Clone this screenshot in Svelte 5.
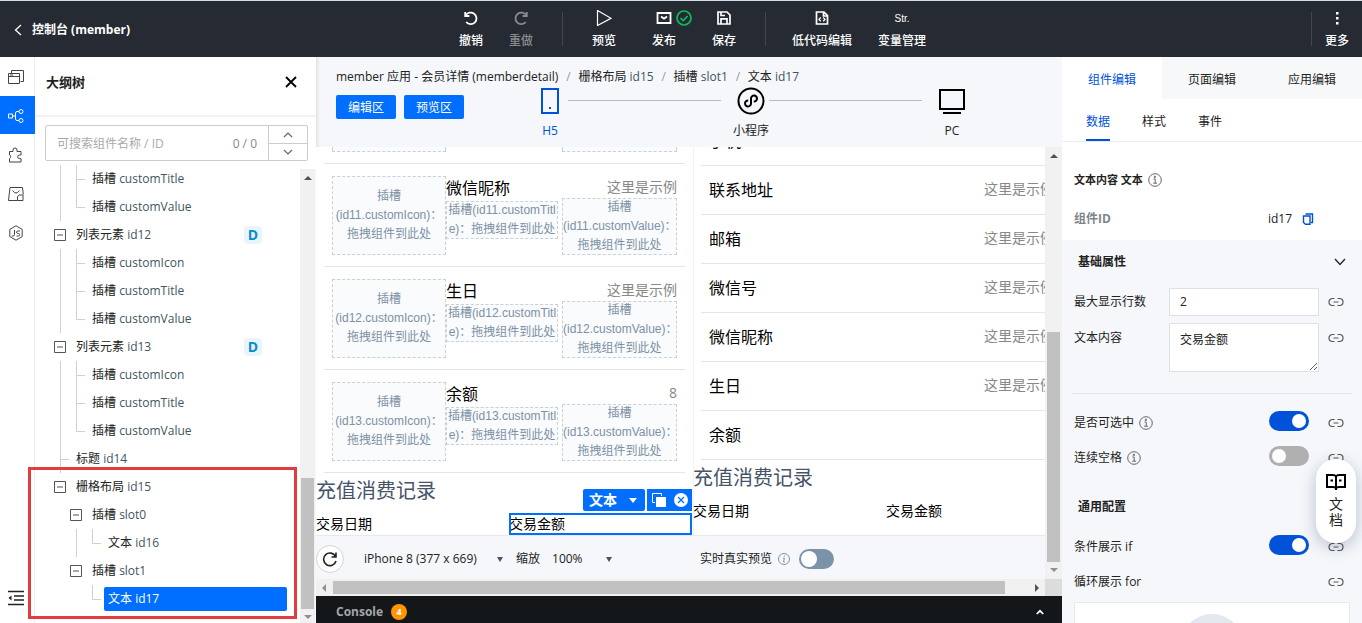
<script lang="ts">
  // guides: v = line, t = tee, l = elbow, o = toggle, e = empty
  const treeRows = [
    { guides: 'vt', name: '插槽', id: 'customTitle' },
    { guides: 'vl', name: '插槽', id: 'customValue' },
    { guides: 'o', name: '列表元素', id: 'id12', badge: true },
    { guides: 'vt', name: '插槽', id: 'customIcon' },
    { guides: 'vt', name: '插槽', id: 'customTitle' },
    { guides: 'vl', name: '插槽', id: 'customValue' },
    { guides: 'o', name: '列表元素', id: 'id13', badge: true },
    { guides: 'vt', name: '插槽', id: 'customIcon' },
    { guides: 'vt', name: '插槽', id: 'customTitle' },
    { guides: 'vl', name: '插槽', id: 'customValue' },
    { guides: 't', name: '标题', id: 'id14' },
    { guides: 'o', name: '栅格布局', id: 'id15' },
    { guides: 'eo', name: '插槽', id: 'slot0' },
    { guides: 'evl', name: '文本', id: 'id16' },
    { guides: 'eo', name: '插槽', id: 'slot1' },
    { guides: 'eel', name: '文本', id: 'id17', selected: true }
  ];

  const editRows = [
    { id: 'id11', title: '微信昵称', value: '这里是示例' },
    { id: 'id12', title: '生日', value: '这里是示例' },
    { id: 'id13', title: '余额', value: '8' }
  ];

  const previewRows = [
    { title: '手机', value: '' },
    { title: '联系地址', value: '这里是示例' },
    { title: '邮箱', value: '这里是示例' },
    { title: '微信号', value: '这里是示例' },
    { title: '微信昵称', value: '这里是示例' },
    { title: '生日', value: '这里是示例' },
    { title: '余额', value: '' }
  ];

  const crumbs = [
    { name: '栅格布局', id: 'id15' },
    { name: '插槽', id: 'slot1' },
    { name: '文本', id: 'id17' }
  ];

  let keyword = '';
  let maxLines = '2';
  let content = '交易金额';
  let selectable = true;
  let spaces = false;
  let condition = true;
  let livePreview = false;
</script>

{#snippet info()}
  <svg class="info" viewBox="0 0 14 14" width="14" height="14" fill="none" stroke="currentColor">
    <circle cx="7" cy="7" r="6.3" />
    <path d="M5.5 6h1.7v4M5.2 10.2h3.8M6.4 3.2v1.3h1V3.2z" />
  </svg>
{/snippet}

{#snippet link()}
  <button class="plain link" aria-label="绑定数据">
    <svg viewBox="0 0 16 10" width="16" height="10" fill="none" stroke="currentColor" stroke-width="1.2">
      <path d="M6.5 1.5H4.5a3.5 3.5 0 0 0 0 7h2M9.5 1.5h2a3.5 3.5 0 0 1 0 7h-2M5.5 5h5" />
    </svg>
  </button>
{/snippet}

{#snippet arrow(dir)}
  <svg class="arrow" viewBox="0 0 8 8" width="8" height="8" fill="#505050">
    {#if dir === 'up'}<path d="M0 6l4-4 4 4z" />
    {:else if dir === 'down'}<path d="M0 2l4 4 4-4z" fill="#909090" />
    {:else if dir === 'left'}<path d="M6 0L2 4l4 4z" fill="#909090" />
    {:else}<path d="M2 0l4 4-4 4z" />{/if}
  </svg>
{/snippet}

<div class="app">
  <header class="topbar">
    <div class="side">
      <a class="back" href="#console">
        <svg viewBox="0 0 8 12" width="8" height="12" fill="none" stroke="#fff" stroke-width="1.3"><path d="M7 1L1.5 6 7 11" /></svg>
        控制台 (member)
      </a>
    </div>
    <nav class="tools">
      <button class="plain tool narrow">
        <svg viewBox="0 0 16 16" width="16" height="16" fill="none" stroke="currentColor" stroke-width="1.8"><path d="M2.2 2v4h4.2M2.6 5.6A5.8 5.8 0 1 1 3.2 12" /></svg>
        撤销
      </button>
      <button class="plain tool narrow" disabled>
        <svg viewBox="0 0 16 16" width="16" height="16" fill="none" stroke="currentColor" stroke-width="1.8"><path d="M13.8 2v4H9.6M13.4 5.6A5.8 5.8 0 1 0 12.8 12" /></svg>
        重做
      </button>
      <span class="divider first"></span>
      <button class="plain tool">
        <svg viewBox="0 0 16 16" width="16" height="16" fill="none" stroke="currentColor" stroke-width="1.2"><path d="M1.5 0.5L15 8.3 1.5 15.5z" /></svg>
        预览
      </button>
      <button class="plain tool">
        <span class="icon-wrap">
          <svg viewBox="0 0 16 16" width="16" height="16" fill="none" stroke="currentColor" stroke-width="1.8"><path d="M1.5 3h13v10h-13zM5 6.5l3 2.2 3-2.2" /></svg>
          <svg class="done" viewBox="0 0 16 16" width="16" height="16" fill="none" stroke="#0abf5b" stroke-width="1.7"><circle cx="8" cy="8" r="7" /><path d="M4.5 8l2.6 2.6 4.6-4.6" /></svg>
        </span>
        发布
      </button>
      <button class="plain tool">
        <svg viewBox="0 0 16 16" width="16" height="16" fill="none" stroke="currentColor" stroke-width="1.7"><path d="M2 2h9l3 3v9H2zM5 14V8.8h6V14M5 2v3.5h4" /></svg>
        保存
      </button>
      <span class="divider second"></span>
      <button class="plain tool">
        <svg viewBox="0 0 16 16" width="16" height="16" fill="none" stroke="currentColor" stroke-width="1.7"><path d="M2.5 2h7.5l3.5 3.5V14h-11zM9.5 2v4h4" /><path d="M6.8 7.5L5 9.4l1.8 1.9M9.2 7.5L11 9.4l-1.8 1.9" stroke-width="1.3" /></svg>
        低代码编辑
      </button>
      <button class="plain tool last">
        <span class="str">Str.</span>
        变量管理
      </button>
    </nav>
    <div class="side end">
      <span class="divider"></span>
      <button class="plain tool narrow">
        <svg viewBox="0 0 16 16" width="16" height="16" fill="currentColor"><path d="M7 2h2.5v2.5H7zM7 7h2.5v2.5H7zM7 12h2.5v2.5H7z" /></svg>
        更多
      </button>
    </div>
  </header>

  <div class="shell">
    <nav class="rail">
      <button class="plain" aria-label="页面">
        <svg viewBox="0 0 16 16" width="16" height="16" fill="none" stroke="currentColor"><path d="M.5 4.5h11v10H.5zM.5 7.5h11M3.5 4.5v-3h12v11h-3M2 6h3" /></svg>
      </button>
      <button class="plain active" aria-label="大纲树">
        <svg viewBox="0 0 16 16" width="16" height="16" fill="none" stroke="currentColor"><path d="M.5 6h4v4h-4zM4.5 8h3M11 3.5H9q-1.5 0-1.5 1.5v6q0 1.5 1.5 1.5h2" /><circle cx="13" cy="3.5" r="2" /><circle cx="13" cy="12.5" r="2" /></svg>
      </button>
      <button class="plain" aria-label="组件">
        <svg viewBox="0 0 16 16" width="16" height="16" fill="none" stroke="currentColor"><path d="M1.5 4.5H5V3a2 2 0 0 1 4 0v1.500h4v3.500h-1.500a1.800 1.800 0 0 0 0 3.600H13v3.400H1.500v-3.500C3 11 3 8 1.500 8z" /></svg>
      </button>
      <button class="plain" aria-label="素材">
        <svg viewBox="0 0 16 16" width="16" height="16" fill="none" stroke="currentColor"><path d="M9.500 14.500H.5L2 1.500h12.500l.8 7M4.500 4.500q3.500 5 7 0M9.500 14.500v-4l2-1.500h3.500v5.500z" /></svg>
      </button>
      <button class="plain" aria-label="脚本">
        <svg viewBox="0 0 16 16" width="16" height="16" fill="none" stroke="currentColor"><path d="M8 .8l6.200 3.600v7.200L8 15.200l-6.200-3.600V4.400zM6.500 5v4.500q0 1.500-1.500 1.500H3.800M12 6H9.500q-1 .2-1 1.200t1 1.200h1q1.200.2 1.200 1.300T10.500 11H8.500" /></svg>
      </button>
      <button class="plain collapse" aria-label="收起">
        <svg viewBox="0 0 16 16" width="18" height="16" fill="none" stroke="#222" stroke-width="1.700"><path d="M0 1.500h16M6 6h10M6 10h10M0 14.500h16" /><path d="M3.500 5.500v5L.5 8z" fill="#222" stroke="none" /></svg>
      </button>
    </nav>

    <aside class="outline">
      <div class="outline-head">
        <h2>大纲树</h2>
        <button class="plain" aria-label="关闭">
          <svg viewBox="0 0 12 12" width="12" height="12" fill="none" stroke="#000" stroke-width="1.800"><path d="M1 1l10 10M11 1L1 11" /></svg>
        </button>
      </div>
      <div class="search">
        <input type="text" aria-label="搜索组件" placeholder="可搜索组件名称 / ID" bind:value={keyword} />
        <span class="count">0 / 0</span>
        <div class="steps">
          <button class="plain" aria-label="上一个"><svg viewBox="0 0 10 6" width="10" height="6" fill="none" stroke="#567" stroke-width="1.200"><path d="M1 5l4-4 4 4" /></svg></button>
          <button class="plain" aria-label="下一个"><svg viewBox="0 0 10 6" width="10" height="6" fill="none" stroke="#567" stroke-width="1.200"><path d="M1 1l4 4 4-4" /></svg></button>
        </div>
      </div>
      <div class="tree-area">
        <ul class="tree">
          {#each treeRows as row}
            <li>
              {#each row.guides as guide}
                {#if guide === 'o'}
                  <button class="plain guide" aria-label="折叠">
                    <svg viewBox="0 0 12 12" width="12" height="12" fill="none" stroke="#555"><path d="M.5 .5h11v11H.5zM3 6h6" /></svg>
                  </button>
                {:else}
                  <span class="guide {guide}"></span>
                {/if}
              {/each}
              <span class="node" class:selected={row.selected}>{row.name} <em>{row.id}</em></span>
              {#if row.badge}<b class="badge">D</b>{/if}
            </li>
          {/each}
        </ul>
        <div class="scroll-v outline-scroll">
          {@render arrow('up')}
          <span class="thumb"></span>
          {@render arrow('down')}
        </div>
        <div class="highlight"></div>
      </div>
    </aside>

    <main class="stage">
      <div class="stage-head">
        <div class="crumbs">
          <span>member 应用 - 会员详情 (memberdetail)</span>
          {#each crumbs as crumb}
            <i>/</i><span>{crumb.name} <em>{crumb.id}</em></span>
          {/each}
        </div>
        <div class="modes">
          <button class="primary">编辑区</button>
          <button class="primary">预览区</button>
          <div class="devices">
            <button class="plain device current">
              <svg viewBox="0 0 28 28" width="28" height="28" fill="none" stroke="currentColor" stroke-width="2"><path d="M6 2h16v24H6z" /><path d="M13 21h2" /></svg>
              H5
            </button>
            <span class="rule"></span>
            <button class="plain device">
              <svg viewBox="0 0 28 28" width="28" height="28" fill="none" stroke="#000" stroke-width="2"><circle cx="14" cy="14" r="12.500" /><path d="M11.200 13.500a3 3 0 1 0 2.800 3v-5a3 3 0 1 1 2.800 3" /></svg>
              小程序
            </button>
            <span class="rule"></span>
            <button class="plain device">
              <svg viewBox="0 0 28 28" width="28" height="28" fill="none" stroke="#000" stroke-width="2"><path d="M2 3h24v19H2zM5 26h18" /></svg>
              PC
            </button>
          </div>
        </div>
      </div>

      <div class="work">
        <div class="work-main">
          <div class="canvas">
            <section class="phone">
              <div class="cell cut"><div class="slot"></div><div></div><div class="slot"></div></div>
              {#each editRows as row}
                <div class="cell">
                  <div class="slot tall"><span>插槽</span><span>({row.id}.customIcon)：</span><span>拖拽组件到此处</span></div>
                  <div class="middle">
                    <p>{row.title}</p>
                    <div class="slot"><span>插槽({row.id}.customTitl</span><span>e)：拖拽组件到此处</span></div>
                  </div>
                  <div class="right">
                    <p>{row.value}</p>
                    <div class="slot"><span>插槽</span><span>({row.id}.customValue)：</span><span>拖拽组件到此处</span></div>
                  </div>
                </div>
              {/each}
              <h3>充值消费记录</h3>
              <div class="columns">
                <span>交易日期</span>
                <span class="picked">
                  交易金额
                  <span class="picked-bar">
                    <button class="picked-name">文本 <svg viewBox="0 0 8 5" width="8" height="5" fill="#fff"><path d="M0 0h8L4 5z" /></svg></button>
                    <span class="picked-actions">
                      <button class="plain" aria-label="复制"><svg viewBox="0 0 14 14" width="14" height="14"><path d="M.5 9.500V.5h9V3" fill="none" stroke="#fff" /><path d="M4 4h10v10H4z" fill="#fff" /><path d="M.5 9.500H3" stroke="#fff" /></svg></button>
                      <button class="plain" aria-label="删除"><svg viewBox="0 0 14 14" width="14" height="14"><circle cx="7" cy="7" r="7" fill="#fff" /><path d="M4 4l6 6M10 4l-6 6" stroke="#006eff" stroke-width="1.300" /></svg></button>
                    </span>
                  </span>
                </span>
              </div>
            </section>
            <section class="phone preview">
              {#each previewRows as row}
                <div class="line"><span>{row.title}</span><small>{row.value}</small></div>
              {/each}
              <h3>充值消费记录</h3>
              <div class="columns">
                <span>交易日期</span>
                <span>交易金额</span>
              </div>
            </section>
          </div>
          <div class="stage-foot">
            <button class="plain refresh" aria-label="刷新">
              <svg viewBox="0 0 16 16" width="16" height="16" fill="none" stroke="#222" stroke-width="1.600"><path d="M14 1.500V6H9.500M13.600 5.600A6.300 6.300 0 1 0 14 10" /></svg>
            </button>
            <span class="pick model">
              <select aria-label="机型"><option>iPhone 8 (377 x 669)</option></select>
              <svg viewBox="0 0 6 5" width="6" height="5" fill="#456"><path d="M0 0h6L3 5z" /></svg>
            </span>
            <label for="zoom">缩放</label>
            <span class="pick zoom">
              <select id="zoom"><option>100%</option></select>
              <svg viewBox="0 0 6 5" width="6" height="5" fill="#456"><path d="M0 0h6L3 5z" /></svg>
            </span>
            <label class="live" for="live">实时真实预览</label>
            <svg class="info-live" viewBox="0 0 12 12" width="12" height="12" fill="none" stroke="#7d93a8"><circle cx="6" cy="6" r="5.500" /><path d="M5 5h1.400L5.500 9h1.300M6.500 2.500v1" /></svg>
            <input id="live" class="switch live-switch" type="checkbox" bind:checked={livePreview} />
          </div>
        </div>
        <div class="scroll-v work-scroll">
          {@render arrow('up')}
          <span class="thumb"></span>
          {@render arrow('down')}
        </div>
      </div>
      <div class="scroll-h">
        {@render arrow('left')}
        <span class="thumb"></span>
        {@render arrow('right')}
        <span class="corner"></span>
      </div>
      <div class="console">
        <b>Console</b><span class="warn">4</span>
        <button class="plain" aria-label="展开">
          <svg viewBox="0 0 10 8" width="8" height="8" fill="none" stroke="#fff" stroke-width="2.200"><path d="M1 6.500l4-4 4 4" /></svg>
        </button>
      </div>
    </main>

    <aside class="panel">
      <div class="tabs">
        <button class="on">组件编辑</button>
        <button>页面编辑</button>
        <button>应用编辑</button>
      </div>
      <div class="subtabs">
        <button class="on">数据</button>
        <button>样式</button>
        <button>事件</button>
      </div>
      <div class="summary">
        <h4>文本内容 文本 {@render info()}</h4>
        <div class="ident">
          <b>组件ID</b>
          <span>id17</span>
          <button class="plain" aria-label="复制ID">
            <svg viewBox="0 0 12 12" width="12" height="12" fill="none" stroke="#0052d9" stroke-width="1.400"><path d="M3.500 1h7v8.500H9M1.500 3h6.500v8.300H3.500L1.500 9.500z" /></svg>
          </button>
        </div>
      </div>
      <div class="props">
        <div class="group">
          <h5>基础属性</h5>
          <svg viewBox="0 0 12 8" width="12" height="8" fill="none" stroke="#222" stroke-width="1.300"><path d="M1 1l5 5.500L11 1" /></svg>
        </div>
        <div class="prop">
          <label for="max-lines">最大显示行数</label>
          <input id="max-lines" class="field" type="text" bind:value={maxLines} />
          {@render link()}
        </div>
        <div class="prop area">
          <label for="content">文本内容</label>
          <textarea id="content" class="field" bind:value={content}></textarea>
          {@render link()}
        </div>
        <hr />
        <div class="prop">
          <label for="selectable">是否可选中</label>{@render info()}
          <input id="selectable" class="switch" type="checkbox" bind:checked={selectable} />
          {@render link()}
        </div>
        <div class="prop">
          <label for="spaces">连续空格</label>{@render info()}
          <input id="spaces" class="switch" type="checkbox" bind:checked={spaces} />
          {@render link()}
        </div>
        <div class="group common"><h5>通用配置</h5></div>
        <div class="prop">
          <label for="condition">条件展示 if</label>
          <input id="condition" class="switch" type="checkbox" bind:checked={condition} />
          {@render link()}
        </div>
        <div class="prop">
          <span class="caption">循环展示 for</span>
          {@render link()}
        </div>
        <div class="card"><span></span></div>
      </div>
      <a class="docs" href="#docs">
        <svg viewBox="0 0 20 18" width="20" height="18" fill="none" stroke="#000" stroke-width="2"><path d="M10 3.500Q9 2 7 2H1v12h6.500q1.500 0 2.500 1.500 1-1.500 2.500-1.500H19V2h-6q-2 0-3 1.500zV17M4.500 7.500h2.500M13 7.500h2.500" /></svg>
        <span>文档</span>
      </a>
    </aside>
  </div>
</div>

<style>
  :global(body) {
    overflow: hidden;
  }

  .app {
    --blue: #006eff;
    --deep: #0052d9;
    display: flex;
    flex-direction: column;
    height: 100vh;
    font: 12px/20px "Open Sans", "Noto Sans CJK SC", sans-serif;
    color: #222;
    background: #fff;
  }

  .app * {
    box-sizing: border-box;
  }

  button, input, select, textarea {
    font: inherit;
    color: inherit;
    margin: 0;
  }

  h2, h3, h4, h5, p, ul {
    margin: 0;
    padding: 0;
  }

  em, i {
    font-style: normal;
  }

  svg {
    display: block;
    flex: none;
  }

  .plain {
    display: flex;
    align-items: center;
    justify-content: center;
    padding: 0;
    border: 0;
    background: none;
  }

  /* Top bar */
  .topbar {
    display: flex;
    flex: none;
    height: 57px;
    color: #fff;
    background: #262b33;
    border-top: 1px solid #d5dfe6;
  }

  .side {
    display: flex;
    flex: 1 1 0;
    align-items: center;
    padding: 2px 0 0 14px;
  }

  .side.end {
    justify-content: flex-end;
    align-items: flex-start;
    padding-top: 9px;
  }

  .back {
    display: flex;
    align-items: center;
    gap: 10px;
    color: #fff;
    font-weight: 700;
    text-decoration: none;
  }

  .tools {
    display: flex;
    padding: 9px 0 0 10px;
  }

  .tool {
    flex-direction: column;
    justify-content: flex-start;
    gap: 5px;
    width: 60px;
    height: 41px;
    color: #fff;
    font-weight: 500;
    white-space: nowrap;
  }

  .tool.narrow {
    width: 50px;
  }

  .tool:disabled {
    color: #888b90;
  }

  .tool.last {
    width: 48px;
    margin-left: 26px;
  }

  .divider {
    width: 1px;
    height: 34px;
    margin-top: 2px;
    background: #42464d;
  }

  .divider.first {
    margin-left: 16px;
    margin-right: 11px;
  }

  .divider.second {
    margin-left: 11px;
    margin-right: 26px;
  }

  .icon-wrap {
    position: relative;
  }

  .done {
    position: absolute;
    left: 20px;
    top: 0;
  }

  .str {
    font: 10px/18px "Liberation Sans", sans-serif;
    height: 16px;
  }

  .shell {
    display: flex;
    flex: 1;
    min-height: 0;
  }

  .rail {
    display: flex;
    flex-direction: column;
    gap: 1px;
    flex: none;
    width: 35px;
    border-right: 1px solid #eee;
    color: #444;
  }

  .rail button {
    width: 35px;
    height: 38px;
    padding: 2px 4px 0 0;
  }

  .rail .active {
    color: #fff;
    background: var(--blue);
  }

  .rail .collapse {
    margin-top: auto;
    margin-bottom: 7px;
  }

  /* Outline tree */
  .outline {
    display: flex;
    flex-direction: column;
    flex: none;
    width: 281px;
  }

  .outline-head {
    display: flex;
    justify-content: space-between;
    align-items: center;
    height: 60px;
    padding: 0 19px 8px 11px;
    border-bottom: 2px solid #f2f2f2;
  }

  h2 {
    font-size: 13px;
    font-weight: 700;
  }

  .search {
    display: flex;
    align-items: center;
    height: 36px;
    margin: 8px 8px 4px 10px;
    border: 1px solid #ccc;
    border-radius: 2px;
  }

  .search input {
    flex: 1;
    min-width: 0;
    padding: 2px 11px 0;
    border: 0;
    outline: none;
    background: none;
  }

  .search input::placeholder {
    color: #aaa;
  }

  .count {
    padding: 2px 11px 0;
    color: #888;
  }

  .steps {
    width: 39px;
    border-left: 1px solid #ccc;
  }

  .steps button {
    width: 100%;
    height: 17px;
  }

  .steps button + button {
    border-top: 1px solid #ccc;
  }

  .tree-area {
    position: relative;
    display: flex;
    flex: 1;
    min-height: 0;
  }

  .tree {
    flex: 1;
    padding-left: 17px;
    overflow: hidden;
    list-style: none;
  }

  .tree li {
    display: flex;
    align-items: center;
    height: 28px;
  }

  .guide {
    position: relative;
    flex: none;
    align-self: stretch;
    width: 16px;
  }

  .v::before, .t::before, .l::before {
    content: '';
    position: absolute;
    left: 8px;
    top: 0;
    bottom: 0;
    border-left: 1px solid #d0d0d0;
  }

  .l::before {
    bottom: 50%;
  }

  .t::after, .l::after {
    content: '';
    position: absolute;
    left: 8px;
    top: 50%;
    width: 9px;
    border-top: 1px solid #d0d0d0;
  }

  .node {
    margin-left: 4px;
    padding: 2px 4px;
    border-radius: 2px;
    white-space: nowrap;
  }

  .node em, .crumbs em {
    color: #3f5663;
  }

  .node.selected {
    flex: 1;
    margin-right: 13px;
    color: #fff;
    background: var(--blue);
  }

  .node.selected em {
    color: #fff;
  }

  .badge {
    width: 18px;
    height: 18px;
    margin-left: auto;
    margin-right: 38px;
    border-radius: 4px;
    color: #0a8acb;
    background: #e8f5fd;
    font-size: 14px;
    line-height: 18px;
    text-align: center;
  }

  .highlight {
    position: absolute;
    inset: 302px 19px 4px -7px;
    border: 3px solid #e33c3f;
    pointer-events: none;
  }

  .scroll-v {
    display: flex;
    flex-direction: column;
    align-items: center;
    flex: none;
    padding: 5px 0;
    background: #f1f1f1;
  }

  .scroll-v .thumb {
    width: 13px;
    margin-top: auto;
    background: #c1c1c1;
  }

  .outline-scroll {
    width: 16px;
    margin-top: 4px;
    padding-bottom: 2px;
    border-right: 1px solid #f7f7f7;
  }

  .outline-scroll .thumb {
    height: 131px;
    margin-bottom: 4px;
  }

  /* Stage */
  .stage {
    display: flex;
    flex-direction: column;
    flex: 1;
    min-width: 0;
  }

  .stage-head {
    flex: none;
    height: 90px;
    padding: 10px 20px 0;
    background: #f5f7fa;
    box-shadow: inset 5px 0 5px -5px #ccc;
  }

  .crumbs {
    display: flex;
    white-space: nowrap;
  }

  .crumbs i {
    width: 20px;
    text-align: center;
    color: #999;
  }

  .modes {
    display: flex;
    align-items: flex-start;
    gap: 8px;
  }

  .primary {
    width: 60px;
    height: 24px;
    margin-top: 8px;
    padding: 2px 0 0;
    border: 0;
    border-radius: 2px;
    color: #fff;
    background: var(--blue);
  }

  .devices {
    display: flex;
    flex: 1;
    margin-left: 60px;
    margin-right: 72px;
  }

  .device {
    flex-direction: column;
    flex: none;
    gap: 6px;
    width: 36px;
    white-space: nowrap;
  }

  .device.current {
    color: var(--deep);
  }

  .rule {
    flex: 1;
    height: 1px;
    margin: 13px 12px 0 0;
    background: #bbb;
  }

  .work {
    display: flex;
    flex: 1;
    min-height: 0;
  }

  .work-main {
    display: flex;
    flex-direction: column;
    flex: 1;
    min-width: 0;
  }

  .canvas {
    display: flex;
    flex: 1;
    min-height: 0;
    overflow: hidden;
  }

  .phone {
    display: flex;
    flex-direction: column;
    justify-content: flex-end;
    flex: none;
    width: 377px;
    color: #000;
  }

  .preview {
    padding-bottom: 13px;
    box-shadow: inset 1px 0 #f3f3f3;
  }

  .cell {
    display: flex;
    align-items: flex-start;
    flex: none;
    height: 103px;
    margin: 0 8px;
    padding: 12px 8px 0;
    border-bottom: 1px solid #e5e5e5;
  }

  .cell > * {
    flex: 1 1 0;
    min-width: 0;
  }

  .cell > :last-child {
    flex: 0 0 115px;
    margin-left: 4px;
  }

  .cell.cut {
    height: 17px;
    padding-top: 0;
  }

  .cut .slot {
    height: 5px;
    border-top: 0;
  }

  .slot {
    display: flex;
    flex-direction: column;
    justify-content: center;
    border: 1px dashed #c8d0d8;
    color: #7d91a5;
    background: #f9fbfd;
    font-family: "Liberation Sans", "Noto Sans CJK SC", sans-serif;
    line-height: 19px;
    text-align: center;
    white-space: nowrap;
  }

  .slot.tall {
    height: 79px;
  }

  .middle p {
    height: 25px;
    font-size: 16px;
    line-height: 24px;
  }

  .middle .slot {
    height: 38px;
  }

  .right p {
    height: 22px;
    color: #888;
    font-size: 14px;
    line-height: 22px;
    text-align: right;
  }

  .right .slot {
    height: 57px;
  }

  h3 {
    flex: none;
    height: 35px;
    color: #465469;
    font-size: 20px;
    font-weight: 400;
    line-height: 36px;
  }

  .columns {
    display: grid;
    grid-template-columns: 193fr 183fr;
    flex: none;
    margin-right: 1px;
    padding: 5px 0 0;
    font-size: 14px;
    line-height: 22px;
  }

  .picked {
    position: relative;
    outline: 2px solid var(--blue);
    outline-offset: -2px;
  }

  .picked-bar {
    position: absolute;
    right: 0;
    bottom: 24px;
    display: flex;
    gap: 2px;
  }

  .picked-name {
    display: flex;
    align-items: center;
    gap: 12px;
    height: 22px;
    padding: 0 8px 0 6px;
    border: 0;
    border-radius: 2px;
    color: #fff;
    background: var(--blue);
    font-weight: 700;
    white-space: nowrap;
  }

  .picked-actions {
    display: flex;
    gap: 8px;
    padding: 0 4px 0 5px;
    background: var(--blue);
  }

  .line {
    display: flex;
    align-items: center;
    justify-content: space-between;
    flex: none;
    height: 49px;
    margin: 0 8px;
    padding: 0 8px;
    border-bottom: 1px solid #e5e5e5;
    font-size: 16px;
  }

  .line small {
    padding-bottom: 2px;
    color: #888;
    font-size: 14px;
  }

  .stage-foot {
    display: flex;
    align-items: center;
    flex: none;
    height: 44px;
    padding-top: 3px;
    background: #f5f7fa;
    border-top: 1px solid #e8e8e8;
    white-space: nowrap;
  }

  .refresh {
    width: 28px;
    height: 28px;
    border: 1px solid #d5d5d5;
    border-radius: 50%;
    background: #fff;
  }

  .pick {
    display: flex;
    align-items: center;
  }

  .pick select {
    flex: 1;
    padding: 0;
    border: 0;
    appearance: none;
    background: none;
  }

  .model {
    width: 139px;
    margin: 0 13px 0 20px;
  }

  .zoom {
    width: 60px;
    margin-left: 12px;
  }

  .live {
    margin-left: 88px;
  }

  .info-live {
    margin: 0 9px 0 6px;
  }

  .scroll-v.work-scroll {
    width: 17px;
  }

  .work-scroll .thumb {
    height: 230px;
    margin-bottom: 4px;
  }

  .scroll-h {
    display: flex;
    align-items: center;
    flex: none;
    height: 17px;
    padding-left: 4px;
    background: #f1f1f1;
  }

  .scroll-h .thumb {
    flex: 0 1 672px;
    height: 13px;
    margin-left: 5px;
    margin-right: auto;
    background: #c1c1c1;
  }

  .corner {
    align-self: stretch;
    width: 17px;
    margin-left: 4px;
    background: #dcdcdc;
  }

  .console {
    display: flex;
    align-items: center;
    gap: 8px;
    flex: none;
    height: 27px;
    padding: 4px 18px 0 20px;
    color: #a3a6a9;
    background: #14171a;
  }

  .console button {
    margin-left: auto;
  }

  .warn {
    width: 16px;
    height: 16px;
    border-radius: 50%;
    color: #fff;
    background: #ff9500;
    font-size: 9px;
    font-weight: 700;
    line-height: 16px;
    text-align: center;
  }

  /* Settings panel */
  .panel {
    position: relative;
    display: flex;
    flex-direction: column;
    flex: none;
    width: 300px;
    overflow: hidden;
  }

  .tabs, .subtabs {
    display: flex;
    flex: none;
  }

  .tabs button, .subtabs button {
    padding: 3px 0 0;
    border: 0;
    background: none;
  }

  .tabs button {
    flex: 1;
    height: 42px;
    background: #f7f8f9;
  }

  .tabs .on {
    color: var(--deep);
    background: #fff;
  }

  .subtabs {
    gap: 32px;
    height: 43px;
    padding: 0 24px;
    border-bottom: 1px solid #eee;
  }

  .subtabs .on {
    color: var(--deep);
    box-shadow: inset 0 -2px var(--deep);
  }

  .summary {
    flex: none;
    height: 98px;
    padding: 28px 48px 0 12px;
  }

  h4 {
    display: flex;
    align-items: center;
    font-size: 11px;
  }

  .info {
    margin-left: 5px;
    color: #666;
  }

  .ident {
    display: flex;
    align-items: center;
    gap: 10px;
    margin-top: 19px;
  }

  .ident b {
    margin-right: auto;
    color: #808488;
  }

  .props {
    flex: 1;
    min-height: 0;
    background: #f5f7fa;
  }

  .group {
    display: flex;
    align-items: center;
    justify-content: space-between;
    height: 44px;
    padding: 0 16px;
  }

  h5 {
    font-size: 12px;
  }

  .group.common {
    height: 54px;
    padding-top: 10px;
  }

  .prop {
    display: flex;
    align-items: center;
    height: 35px;
    padding: 0 18px 0 12px;
  }

  .prop.area {
    align-items: flex-start;
    height: 57px;
    padding-top: 4px;
  }

  .area label, .area .link {
    margin-top: 5px;
  }

  .field {
    width: 150px;
    height: 28px;
    margin-left: auto;
    padding: 0 10px;
    border: 1px solid #dde1e6;
    border-radius: 0;
    background: #fff;
  }

  textarea.field {
    height: 49px;
    padding: 6px 10px;
  }

  .link {
    height: 20px;
    margin-left: 9px;
    color: #555;
  }

  .switch {
    flex: none;
    appearance: none;
    width: 40px;
    height: 20px;
    margin-left: auto;
    margin-right: 10px;
    margin-bottom: 4px;
    padding: 3px;
    border-radius: 10px;
    background: #b0b0b0;
  }

  .switch::before {
    content: '';
    display: block;
    width: 14px;
    height: 14px;
    border-radius: 50%;
    background: #fff;
  }

  .switch:checked {
    background: var(--deep);
  }

  .switch:checked::before {
    margin-left: auto;
  }

  .live-switch {
    width: 35px;
    margin: 0;
    padding: 2px;
    background: #7a93a8;
  }

  .live-switch::before {
    width: 16px;
    height: 16px;
  }

  .caption {
    margin-right: auto;
  }

  hr {
    height: 1px;
    margin: 17px 10px 11px;
    border: 0;
    background: #e3e6ea;
  }

  .card {
    display: flex;
    justify-content: center;
    height: 100px;
    margin: 3px 12px 0;
    padding-top: 11px;
    border: 1px solid #e8eaee;
    background: #fff;
  }

  .card span {
    width: 64px;
    height: 64px;
    border-radius: 50%;
    background: #e3e8ef;
  }

  .docs {
    position: absolute;
    right: 6px;
    bottom: 80px;
    display: flex;
    flex-direction: column;
    align-items: center;
    gap: 5px;
    width: 40px;
    height: 84px;
    padding-top: 14px;
    border-radius: 20px;
    color: #222;
    background: #fff;
    box-shadow: 0 4px 16px rgba(40, 60, 110, .3);
    font-size: 14px;
    line-height: 16px;
    text-decoration: none;
  }

  .docs span {
    width: 14px;
  }
</style>
